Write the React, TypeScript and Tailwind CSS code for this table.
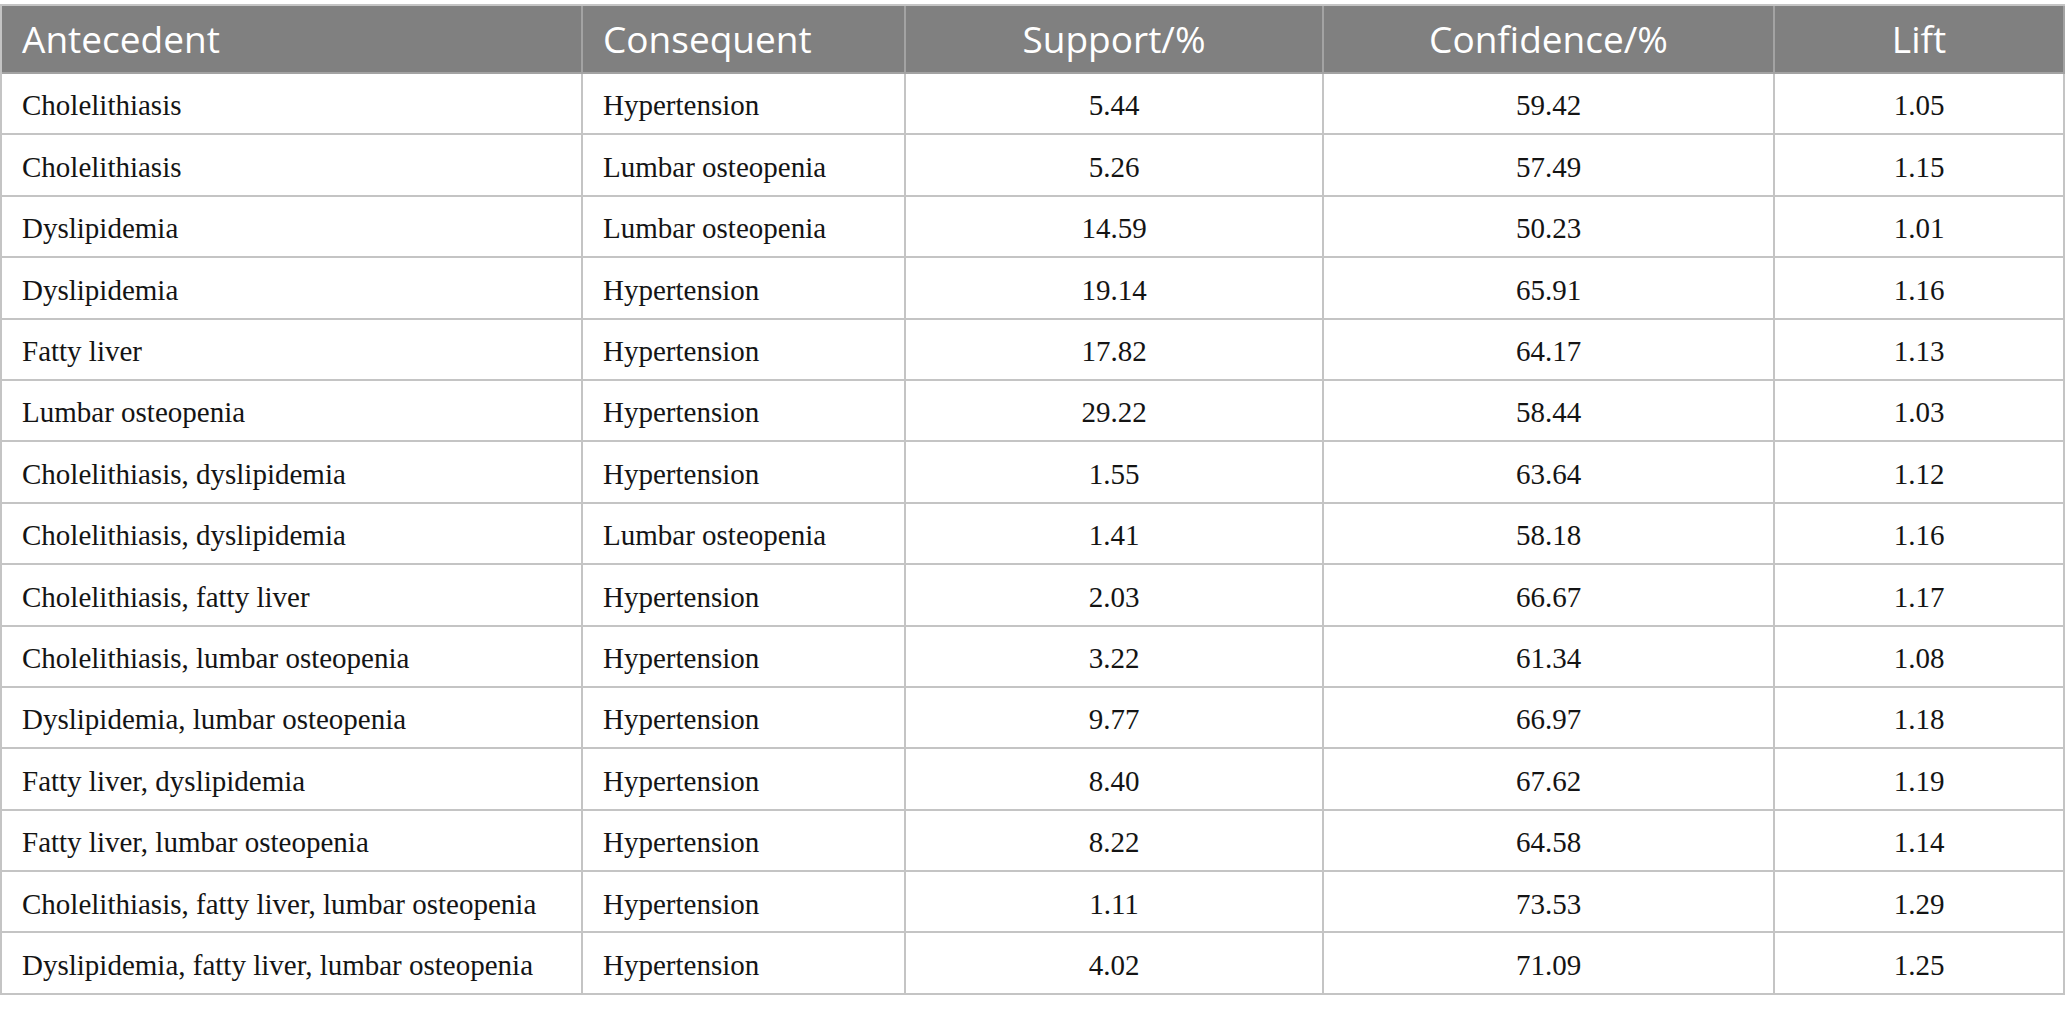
import React from "react";

const rows: [string, string, string, string, string][] = [
  ["Cholelithiasis", "Hypertension", "5.44", "59.42", "1.05"],
  ["Cholelithiasis", "Lumbar osteopenia", "5.26", "57.49", "1.15"],
  ["Dyslipidemia", "Lumbar osteopenia", "14.59", "50.23", "1.01"],
  ["Dyslipidemia", "Hypertension", "19.14", "65.91", "1.16"],
  ["Fatty liver", "Hypertension", "17.82", "64.17", "1.13"],
  ["Lumbar osteopenia", "Hypertension", "29.22", "58.44", "1.03"],
  ["Cholelithiasis, dyslipidemia", "Hypertension", "1.55", "63.64", "1.12"],
  ["Cholelithiasis, dyslipidemia", "Lumbar osteopenia", "1.41", "58.18", "1.16"],
  ["Cholelithiasis, fatty liver", "Hypertension", "2.03", "66.67", "1.17"],
  ["Cholelithiasis, lumbar osteopenia", "Hypertension", "3.22", "61.34", "1.08"],
  ["Dyslipidemia, lumbar osteopenia", "Hypertension", "9.77", "66.97", "1.18"],
  ["Fatty liver, dyslipidemia", "Hypertension", "8.40", "67.62", "1.19"],
  ["Fatty liver, lumbar osteopenia", "Hypertension", "8.22", "64.58", "1.14"],
  ["Cholelithiasis, fatty liver, lumbar osteopenia", "Hypertension", "1.11", "73.53", "1.29"],
  ["Dyslipidemia, fatty liver, lumbar osteopenia", "Hypertension", "4.02", "71.09", "1.25"],
];

export default function App() {
  return (
    <div className="w-[2065px] h-[1012px] bg-white pt-[4px]">
      <div className="w-[2065px] border-t-2 border-l-2 border-[#c4c4c4]">
        <div
          className="grid grid-cols-[581px_323px_418px_451px_290px] h-[68px] bg-[#808080] text-white text-[37px] font-normal"
          style={{ fontFamily: '"Open Sans", "Noto Sans", sans-serif' }}
        >
          <div className="flex items-center pl-[20px] border-r-2 border-b-2 border-[#a3a3a3]">Antecedent</div>
          <div className="flex items-center pl-[20px] border-r-2 border-b-2 border-[#a3a3a3]">Consequent</div>
          <div className="flex items-center justify-center border-r-2 border-b-2 border-[#a3a3a3]">Support/%</div>
          <div className="flex items-center justify-center border-r-2 border-b-2 border-[#a3a3a3]">Confidence/%</div>
          <div className="flex items-center justify-center border-r-2 border-b-2 border-[#a3a3a3]">Lift</div>
        </div>
        {rows.map((r, i) => (
          <div
            key={i}
            className="grid grid-cols-[581px_323px_418px_451px_290px] h-[61.4px] text-[#141414] text-[29px]"
            style={{ fontFamily: '"Liberation Serif", "Times New Roman", serif' }}
          >
            <div className="flex items-center pl-[20px] pt-[5px] border-r-2 border-b-2 border-[#c4c4c4] whitespace-nowrap">{r[0]}</div>
            <div className="flex items-center pl-[20px] pt-[5px] border-r-2 border-b-2 border-[#c4c4c4] whitespace-nowrap">{r[1]}</div>
            <div className="flex items-center justify-center pt-[5px] border-r-2 border-b-2 border-[#c4c4c4]">{r[2]}</div>
            <div className="flex items-center justify-center pt-[5px] border-r-2 border-b-2 border-[#c4c4c4]">{r[3]}</div>
            <div className="flex items-center justify-center pt-[5px] border-r-2 border-b-2 border-[#c4c4c4]">{r[4]}</div>
          </div>
        ))}
      </div>
    </div>
  );
}
